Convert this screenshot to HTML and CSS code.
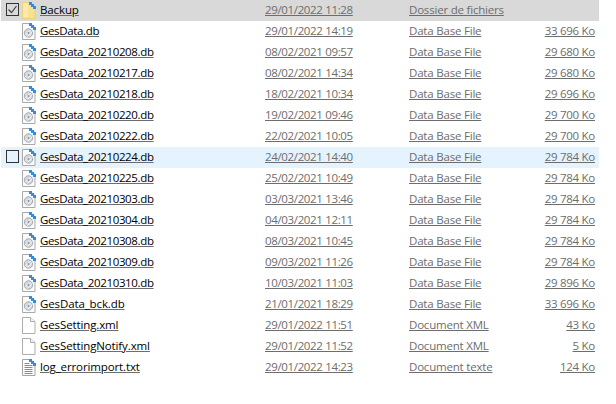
FILE: index.html
```html
<!DOCTYPE html>
<html lang="fr">
<head>
<meta charset="utf-8">
<title>Fichiers</title>
<link rel="stylesheet" href="styles.css">
</head>
<body>
<svg class="defs" width="0" height="0" aria-hidden="true">
  <symbol id="folder" viewBox="0 0 14 17">
    <path d="M.5 .5h8l4.500 4v12H.5z" fill="#fbe08f" stroke="#efcf77"/>
    <path d="M1 1h5v14H1z" fill="#fde9ae"/>
    <path d="M7 0h3v2h2v2h2v3h-3V5H9V3H7z" fill="#2f8fdc"/>
  </symbol>
  <symbol id="db" viewBox="0 0 14 17">
    <path d="M.5 .5h8l4.500 4v12H.5z" fill="#fbfbfb" stroke="#a9a9a9"/>
    <ellipse cx="6.500" cy="10" rx="4.200" ry="4.200" fill="#d5d9dd" stroke="#a3a9af"/>
    <path d="M3.500 12l5-5M5.500 13.500l5-5" stroke="#f3f5f7"/>
    <circle cx="6.500" cy="10" r="1" fill="#8d979f"/>
    <path d="M7 0h3v2h2v2h2v3h-3V5H9V3H7z" fill="#2f8fdc"/>
  </symbol>
  <symbol id="blank" viewBox="0 0 14 17">
    <path d="M.5 .5h8l4.500 4v12H.5z" fill="#fff" stroke="#adadad"/>
    <path d="M8.500 .5v4h4.500" fill="#f2f2f2" stroke="#adadad"/>
  </symbol>
  <symbol id="txt" viewBox="0 0 14 17">
    <path d="M.5 .5h8l4.500 4v12H.5z" fill="#fff" stroke="#a3a3a3"/>
    <path d="M2.500 4.500h5M2.500 6.500h8M2.500 8.500h8M2.500 10.500h8M2.500 12.500h8M2.500 14.500h8" stroke="#8a8a8a"/>
    <path d="M7 0h3v2h2v2h2v3h-3V5H9V3H7z" fill="#2f8fdc"/>
  </symbol>
</svg>
<div class="list">
  <div class="row selected">
    <span class="check"><svg viewBox="0 0 11 11" class="tick"><path d="M1.500 5.500l3 3 5-6.500" fill="none" stroke="#444" stroke-width="1.200"/></svg></span>
    <svg class="icon"><use href="#folder"/></svg>
    <span class="name word">Backup</span><span class="date">29/01/2022 11:28</span><span class="type">Dossier de fichiers</span><span class="size"></span>
  </div>
  <div class="row"><span class="nocheck"></span><svg class="icon"><use href="#db"/></svg><span class="name">GesData.db</span><span class="date">29/01/2022 14:19</span><span class="type">Data Base File</span><span class="size">33 696 Ko</span></div>
  <div class="row"><span class="nocheck"></span><svg class="icon"><use href="#db"/></svg><span class="name">GesData_20210208.db</span><span class="date">08/02/2021 09:57</span><span class="type">Data Base File</span><span class="size">29 680 Ko</span></div>
  <div class="row"><span class="nocheck"></span><svg class="icon"><use href="#db"/></svg><span class="name">GesData_20210217.db</span><span class="date">08/02/2021 14:34</span><span class="type">Data Base File</span><span class="size">29 680 Ko</span></div>
  <div class="row"><span class="nocheck"></span><svg class="icon"><use href="#db"/></svg><span class="name">GesData_20210218.db</span><span class="date">18/02/2021 10:34</span><span class="type">Data Base File</span><span class="size">29 696 Ko</span></div>
  <div class="row"><span class="nocheck"></span><svg class="icon"><use href="#db"/></svg><span class="name">GesData_20210220.db</span><span class="date">19/02/2021 09:46</span><span class="type">Data Base File</span><span class="size">29 700 Ko</span></div>
  <div class="row"><span class="nocheck"></span><svg class="icon"><use href="#db"/></svg><span class="name">GesData_20210222.db</span><span class="date">22/02/2021 10:05</span><span class="type">Data Base File</span><span class="size">29 700 Ko</span></div>
  <div class="row hover"><span class="check"></span><svg class="icon"><use href="#db"/></svg><span class="name">GesData_20210224.db</span><span class="date">24/02/2021 14:40</span><span class="type">Data Base File</span><span class="size">29 784 Ko</span></div>
  <div class="row"><span class="nocheck"></span><svg class="icon"><use href="#db"/></svg><span class="name">GesData_20210225.db</span><span class="date">25/02/2021 10:49</span><span class="type">Data Base File</span><span class="size">29 784 Ko</span></div>
  <div class="row"><span class="nocheck"></span><svg class="icon"><use href="#db"/></svg><span class="name">GesData_20210303.db</span><span class="date">03/03/2021 13:46</span><span class="type">Data Base File</span><span class="size">29 784 Ko</span></div>
  <div class="row"><span class="nocheck"></span><svg class="icon"><use href="#db"/></svg><span class="name">GesData_20210304.db</span><span class="date">04/03/2021 12:11</span><span class="type">Data Base File</span><span class="size">29 784 Ko</span></div>
  <div class="row"><span class="nocheck"></span><svg class="icon"><use href="#db"/></svg><span class="name">GesData_20210308.db</span><span class="date">08/03/2021 10:45</span><span class="type">Data Base File</span><span class="size">29 784 Ko</span></div>
  <div class="row"><span class="nocheck"></span><svg class="icon"><use href="#db"/></svg><span class="name">GesData_20210309.db</span><span class="date">09/03/2021 11:26</span><span class="type">Data Base File</span><span class="size">29 784 Ko</span></div>
  <div class="row"><span class="nocheck"></span><svg class="icon"><use href="#db"/></svg><span class="name">GesData_20210310.db</span><span class="date">10/03/2021 11:03</span><span class="type">Data Base File</span><span class="size">29 896 Ko</span></div>
  <div class="row"><span class="nocheck"></span><svg class="icon"><use href="#db"/></svg><span class="name word">GesData_bck.db</span><span class="date">21/01/2021 18:29</span><span class="type">Data Base File</span><span class="size">33 696 Ko</span></div>
  <div class="row"><span class="nocheck"></span><svg class="icon"><use href="#blank"/></svg><span class="name word">GesSetting.xml</span><span class="date">29/01/2022 11:51</span><span class="type">Document XML</span><span class="size">43 Ko</span></div>
  <div class="row"><span class="nocheck"></span><svg class="icon"><use href="#blank"/></svg><span class="name word">GesSettingNotify.xml</span><span class="date">29/01/2022 11:52</span><span class="type">Document XML</span><span class="size">5 Ko</span></div>
  <div class="row"><span class="nocheck"></span><svg class="icon"><use href="#txt"/></svg><span class="name word">log_errorimport.txt</span><span class="date">29/01/2022 14:23</span><span class="type">Document texte</span><span class="size">124 Ko</span></div>
</div>
</body>
</html>
```
FILE: styles.css
```css
html, body {
  margin: 0;
  padding: 0;
  background: #fff;
}
body {
  width: 616px;
  height: 404px;
  overflow: hidden;
  font-family: "Open Sans", "Noto Sans", sans-serif;
  font-size: 11.5px;
  letter-spacing: -0.35px;
}
.defs {
  position: absolute;
}
.list {
  display: flex;
  flex-direction: column;
  width: 598px;
  margin-left: 1px;
}
.row {
  display: flex;
  align-items: center;
  height: 21px;
  flex: none;
  padding-left: 5px;
  color: #6d6d6d;
  text-decoration: underline;
}
.row span {
  margin-top: -2px;
}
.row.selected {
  background: #d9d9d9;
}
.row.hover {
  background: #e5f3ff;
}
.check, .nocheck {
  flex: none;
  width: 13px;
  height: 13px;
  margin-right: 3px;
}
.check {
  border: 1px solid #333;
  box-sizing: border-box;
}
.tick {
  display: block;
  width: 11px;
  height: 11px;
}
.icon {
  flex: none;
  width: 14px;
  height: 17px;
  margin: -1px 4px 0 0;
}
.name {
  flex: none;
  width: 225px;
  color: #000;
}
.word {
  letter-spacing: -0.12px;
}
.date {
  flex: none;
  width: 144px;
}
.type {
  flex: none;
  width: 120px;
  letter-spacing: -0.2px;
}
.size {
  flex: none;
  width: 66px;
  text-align: right;
  letter-spacing: -0.28px;
}
```
